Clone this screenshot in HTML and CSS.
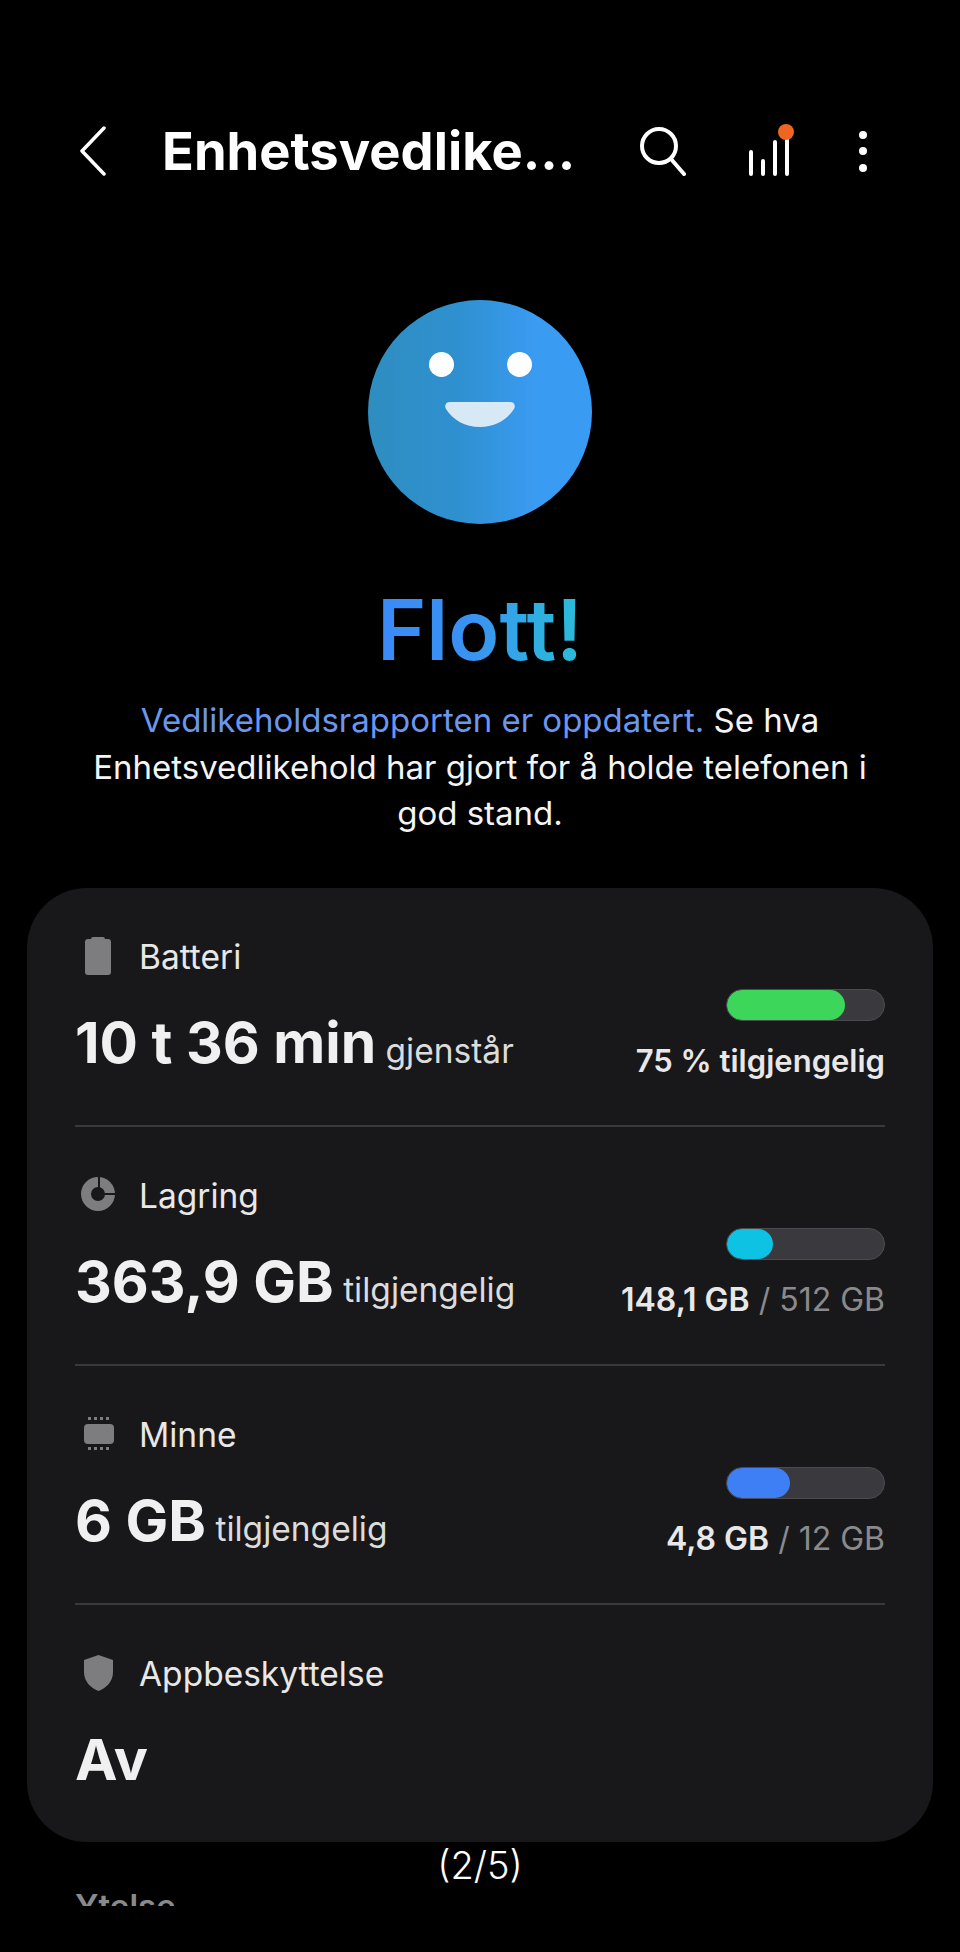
FILE: index.html
```html
<!DOCTYPE html>
<html lang="no">
<head>
    <meta charset="UTF-8">
    <meta name="viewport" content="width=device-width, initial-scale=1.0">
    <title>Enhetsvedlikehold</title>
    <link rel="stylesheet" href="styles.css">
</head>
<body>
    <div class="screen">
        <header class="app-bar">
            <svg class="back-icon" width="30" height="50" viewBox="0 0 30 50"><path d="M26 2 L4 25 L26 48"/></svg>
            <h1 class="app-title">Enhetsvedlike...</h1>
            <svg class="search-icon" width="48" height="50" viewBox="0 0 48 50"><circle cx="21" cy="20" r="17"/><path d="M33 33 L46 48"/></svg>
            <div class="stats-icon">
                <svg width="44" height="50" viewBox="0 0 44 50"><path d="M4 26 V48 M16 35 V48 M28 16 V48 M40 13 V48"/></svg>
                <span class="stats-dot"></span>
            </div>
            <div class="more-icon"><span></span><span></span><span></span></div>
        </header>

        <section class="hero">
            <div class="face">
                <div class="eyes"><span></span><span></span></div>
                <svg class="mouth" width="70" height="25" viewBox="0 0 70 25"><path d="M5 0 H65 C69 0 71 3 69 7 C62 18 50 25 35 25 C20 25 8 18 1 7 C-1 3 1 0 5 0 Z"/></svg>
            </div>
            <h2 class="hero-title">Flott!</h2>
            <p class="hero-text"><span class="hero-link">Vedlikeholdsrapporten er oppdatert.</span> Se hva Enhetsvedlikehold har gjort for å holde telefonen i god stand.</p>
        </section>

        <section class="card">
            <div class="row">
                <div class="row-label">
                    <svg class="row-icon" width="36" height="40" viewBox="0 0 36 40"><path d="M13 1 h10 a2 2 0 0 1 2 2 h3 a3 3 0 0 1 3 3 v30 a3 3 0 0 1 -3 3 h-20 a3 3 0 0 1 -3 -3 v-30 a3 3 0 0 1 3 -3 h3 a2 2 0 0 1 2 -2 z"/></svg>
                    <span>Batteri</span>
                </div>
                <div class="row-main">
                    <div class="value"><strong>10 t 36 min</strong> <span>gjenstår</span></div>
                    <div class="meter">
                        <div class="bar"><div class="bar-fill green" style="width: 75%"></div></div>
                        <div class="meter-text battery-text"><b>75 % tilgjengelig</b></div>
                    </div>
                </div>
            </div>

            <div class="row">
                <div class="row-label">
                    <svg class="row-icon" width="36" height="40" viewBox="0 0 36 40"><circle cx="18" cy="19" r="17"/><circle class="pie-cut" cx="18" cy="19" r="6"/><path class="pie-cut" d="M19 1 V15 M22 19 H36"/></svg>
                    <span>Lagring</span>
                </div>
                <div class="row-main">
                    <div class="value"><strong>363,9 GB</strong> <span>tilgjengelig</span></div>
                    <div class="meter">
                        <div class="bar"><div class="bar-fill cyan" style="width: 29%"></div></div>
                        <div class="meter-text"><b>148,1 GB</b> / 512 GB</div>
                    </div>
                </div>
            </div>

            <div class="row">
                <div class="row-label">
                    <svg class="row-icon" width="36" height="40" viewBox="0 0 36 40"><rect x="4" y="10" width="30" height="20" rx="4"/><path d="M8 3 h3 v3 h-3 z M14 3 h3 v3 h-3 z M20 3 h3 v3 h-3 z M26 3 h3 v3 h-3 z M8 33 h3 v3 h-3 z M14 33 h3 v3 h-3 z M20 33 h3 v3 h-3 z M26 33 h3 v3 h-3 z"/></svg>
                    <span>Minne</span>
                </div>
                <div class="row-main">
                    <div class="value"><strong>6 GB</strong> <span>tilgjengelig</span></div>
                    <div class="meter">
                        <div class="bar"><div class="bar-fill blue" style="width: 40%"></div></div>
                        <div class="meter-text"><b>4,8 GB</b> / 12 GB</div>
                    </div>
                </div>
            </div>

            <div class="row">
                <div class="row-label">
                    <svg class="row-icon" width="36" height="40" viewBox="0 0 36 40"><path d="M18.500 2 L33 7 V19 C33 29 26 35 18.500 38 C11 35 4 29 4 19 V7 Z"/></svg>
                    <span>Appbeskyttelse</span>
                </div>
                <div class="value value-last"><strong>Av</strong></div>
            </div>
        </section>

        <div class="next-section"><div class="next-title">Ytelse</div></div>
        <div class="page-count">(2/5)</div>
    </div>
</body>
</html>
```

FILE: styles.css
```css
* {
    margin: 0;
    padding: 0;
    box-sizing: border-box;
    font-family: Inter, 'Noto Sans', sans-serif;
}

body {
    background-color: #000;
    color: #f2f2f2;
    width: 960px;
    height: 1952px;
    overflow: hidden;
}

.screen {
    position: relative;
    height: 1952px;
}

/* top bar */
.app-bar {
    display: flex;
    align-items: center;
    height: 50px;
    margin-top: 126px;
    padding-left: 78px;
    position: absolute;
    top: 0;
    left: 0;
    right: 0;
}

.app-bar svg {
    fill: none;
    stroke: #fff;
    display: block;
}

.back-icon {
    stroke-width: 3.5;
    stroke-linecap: round;
    stroke-linejoin: round;
}

.app-title {
    width: 476px;
    margin-left: 54px;
    font-size: 52.5px;
    font-weight: 700;
    color: #fff;
    white-space: nowrap;
}

.search-icon {
    stroke-width: 4;
    stroke-linecap: round;
}

.stats-icon {
    position: relative;
    margin-left: 61px;
    width: 44px;
    height: 50px;
}

.stats-icon svg {
    stroke-width: 4;
    stroke-linecap: round;
}

.stats-dot {
    position: absolute;
    top: -2px;
    left: 31px;
    width: 16px;
    height: 16px;
    border-radius: 50%;
    background-color: #f0651f;
}

.more-icon {
    display: flex;
    flex-direction: column;
    gap: 8.5px;
    margin-left: 68px;
}

.more-icon span {
    width: 8px;
    height: 8px;
    border-radius: 50%;
    background-color: #fff;
}

/* hero */
.hero {
    display: flex;
    flex-direction: column;
    align-items: center;
    padding-top: 300px;
}

.face {
    width: 224px;
    height: 224px;
    border-radius: 50%;
    background: linear-gradient(to right, #2e8ec0 0%, #2f90d0 40%, #3a9bf2 75%, #3a9bf4 100%);
    padding-top: 52px;
}

.eyes {
    display: flex;
    justify-content: center;
    gap: 53px;
}

.eyes span {
    width: 25px;
    height: 25px;
    border-radius: 50%;
    background-color: #fff;
}

.mouth {
    display: block;
    margin: 25px auto 0;
    fill: #d8e9f6;
}

.hero-title {
    margin-top: 56px;
    font-size: 84px;
    line-height: 100px;
    font-weight: 600;
    background: linear-gradient(to right, #3a8af8 0%, #3a92f2 45%, #2fb0e0 80%, #2cbcd8 100%);
    -webkit-background-clip: text;
    background-clip: text;
    color: transparent;
}

.hero-text {
    width: 800px;
    margin-top: 17px;
    font-size: 33px;
    line-height: 46.5px;
    text-align: center;
    color: #f4f4f4;
}

.hero-link {
    color: #6b96ee;
}

/* card */
.card {
    position: absolute;
    top: 888px;
    left: 27px;
    width: 906px;
    height: 954px;
    padding: 0 48px;
    background-color: #18181a;
    border-radius: 60px;
}

.row {
    height: 239px;
    padding-top: 49px;
    border-bottom: 2px solid #38393b;
}

.row:last-child {
    border-bottom: none;
}

.row-label {
    display: flex;
    align-items: center;
    height: 40px;
    font-size: 33.5px;
    color: #e8e8e8;
}

.row-icon {
    fill: #7d7d7f;
    margin-top: -2px;
    margin-left: 5px;
    margin-right: 23px;
    flex-shrink: 0;
}

.pie-cut {
    fill: #18181a;
    stroke: #18181a;
    stroke-width: 2;
}

.row-main {
    display: flex;
    justify-content: space-between;
    margin-top: 12px;
}

.value {
    padding-top: 19px;
    line-height: 70px;
    font-size: 33.5px;
    color: #dcdcdc;
    white-space: nowrap;
}

.value strong {
    font-size: 57px;
    font-weight: 700;
    color: #f0f0f0;
}

.value-last {
    padding-top: 31px;
}

.meter {
    display: flex;
    flex-direction: column;
    align-items: flex-end;
    gap: 20px;
}

.bar {
    width: 159px;
    height: 32px;
    border-radius: 16px;
    background-color: #3a3a3e;
    border: 1px solid #4c4c50;
    overflow: hidden;
}

.bar-fill {
    height: 100%;
    border-radius: 16px;
}

.green {
    background-color: #3bd65a;
}

.cyan {
    background-color: #0dc2e2;
}

.blue {
    background-color: #3f7ff5;
}

.meter-text {
    font-size: 32px;
    line-height: 40px;
    color: #8a8a8c;
    white-space: nowrap;
}

.battery-text {
    font-size: 31px;
}

.meter-text b {
    font-weight: 600;
    color: #e8e8e8;
}

/* next section, cut off by the bottom of the scroll area */
.next-section {
    position: absolute;
    top: 1888px;
    left: 75px;
    height: 18px;
    overflow: hidden;
}

.next-title {
    font-size: 33px;
    line-height: 36px;
    font-weight: 600;
    color: #8a8a8a;
}

.page-count {
    position: absolute;
    top: 1844px;
    left: 0;
    right: 0;
    text-align: center;
    font-size: 38px;
    line-height: 42px;
    font-weight: 300;
    color: #fff;
}
```
